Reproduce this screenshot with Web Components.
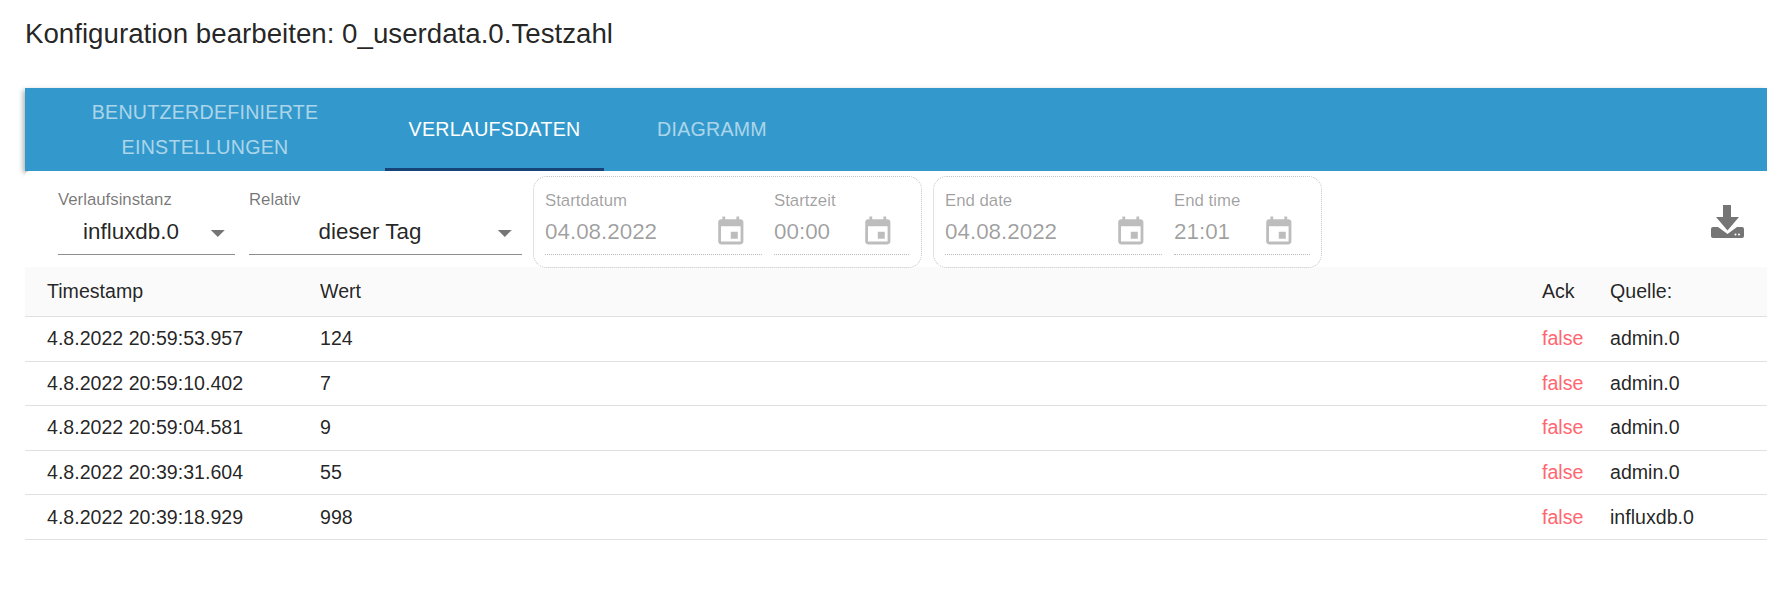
<!DOCTYPE html>
<html lang="de">
<head>
<meta charset="utf-8">
<title>Konfiguration bearbeiten</title>
<style>
  html, body { margin: 0; padding: 0; background: #fff; overflow: hidden; }
  body { font-family: "Liberation Sans", Arial, sans-serif; color: rgba(0, 0, 0, 0.87); }
</style>
</head>
<body>
<config-dialog heading="Konfiguration bearbeiten: 0_userdata.0.Testzahl">
  <tab-bar>
    <tab-item style="width:360px">BENUTZERDEFINIERTE EINSTELLUNGEN</tab-item>
    <tab-item style="width:219px" selected>VERLAUFSDATEN</tab-item>
    <tab-item style="width:216px">DIAGRAMM</tab-item>
  </tab-bar>
  <history-toolbar>
    <select-field label="Verlaufsinstanz" style="width:177px;margin-right:14px">influxdb.0</select-field>
    <select-field label="Relativ" style="width:273px;margin-right:11px">dieser Tag</select-field>
    <date-group style="margin-right:11px">
      <date-field label="Startdatum" style="width:217px;margin-right:12px">04.08.2022</date-field>
      <date-field label="Startzeit" style="width:135px">00:00</date-field>
    </date-group>
    <date-group>
      <date-field label="End date" style="width:217px;margin-right:12px">04.08.2022</date-field>
      <date-field label="End time" style="width:136px">21:01</date-field>
    </date-group>
    <download-button></download-button>
  </history-toolbar>
  <history-table></history-table>
</config-dialog>

<script>
class ConfigDialog extends HTMLElement {
  constructor() {
    super()
    this.attachShadow({ mode: "open" })
    this.shadowRoot.innerHTML = `
      <style>
        :host { display: block; padding: 0 0 0 25px; }
        h2 {
          margin: 0;
          height: 88px;
          padding-top: 16px;
          box-sizing: border-box;
          font-weight: 400;
          font-size: 27.7px;
          line-height: 36px;
          color: rgba(0, 0, 0, 0.87);
        }
      </style>
      <h2>${this.getAttribute("heading")}</h2>
      <slot></slot>
    `
  }
}

class TabBar extends HTMLElement {
  constructor() {
    super()
    this.attachShadow({ mode: "open" })
    this.shadowRoot.innerHTML = `
      <style>
        :host {
          display: flex;
          height: 83px;
          background: #3399cc;
          box-shadow: -2px 2px 5px rgba(0, 0, 0, 0.3);
          position: relative;
        }
      </style>
      <slot></slot>
    `
  }
}

class TabItem extends HTMLElement {
  constructor() {
    super()
    this.attachShadow({ mode: "open" })
    this.shadowRoot.innerHTML = `
      <style>
        :host {
          display: flex;
          align-items: center;
          justify-content: center;
          box-sizing: border-box;
          padding: 3px 24px 0;
          border-bottom: 3px solid transparent;
          font-size: 19.6px;
          font-weight: 400;
          line-height: 34.3px;
          letter-spacing: 0.27px;
          text-align: center;
          color: rgba(255, 255, 255, 0.6);
        }
        :host([selected]) {
          color: #fff;
          border-bottom-color: #164477;
        }
      </style>
      <span><slot></slot></span>
    `
  }
}

class HistoryToolbar extends HTMLElement {
  constructor() {
    super()
    this.attachShadow({ mode: "open" })
    this.shadowRoot.innerHTML = `
      <style>
        :host {
          display: flex;
          position: relative;
          height: 96px;
          box-sizing: border-box;
          padding: 5px 0 0 33px;
          align-items: flex-start;
          background: #fff;
          border-top-left-radius: 5px;
        }
      </style>
      <slot></slot>
    `
  }
}

class SelectField extends HTMLElement {
  constructor() {
    super()
    this.attachShadow({ mode: "open" })
    this.shadowRoot.innerHTML = `
      <style>
        :host { display: block; box-sizing: border-box; height: 79px; flex: none; }
        label {
          display: block;
          padding-top: 15px;
          font-size: 16.8px;
          line-height: 18px;
          color: rgba(0, 0, 0, 0.54);
        }
        .input {
          height: 46px;
          box-sizing: border-box;
          border-bottom: 1.4px solid #8e8e8e;
          display: flex;
          align-items: center;
          padding-right: 31px;
          position: relative;
        }
        .value { flex: 1; text-align: center; font-size: 22.4px; }
        svg { position: absolute; right: 0; top: 6.5px; width: 33.6px; height: 33.6px; fill: rgba(0, 0, 0, 0.54); }
      </style>
      <label>${this.getAttribute("label")}</label>
      <div class="input">
        <span class="value"><slot></slot></span>
        <svg viewBox="0 0 24 24"><path d="M7 10l5 5 5-5z"/></svg>
      </div>
    `
  }
}

class DateGroup extends HTMLElement {
  constructor() {
    super()
    this.attachShadow({ mode: "open" })
    this.shadowRoot.innerHTML = `
      <style>
        :host {
          display: flex;
          flex: none;
          box-sizing: border-box;
          width: 389px;
          height: 92px;
          padding: 0 0 0 11px;
          border: 1px dotted #c4c4c4;
          border-radius: 14px;
        }
      </style>
      <slot></slot>
    `
  }
}

class DateField extends HTMLElement {
  constructor() {
    super()
    this.attachShadow({ mode: "open" })
    this.shadowRoot.innerHTML = `
      <style>
        :host { display: block; flex: none; box-sizing: border-box; color: rgba(0, 0, 0, 0.38); }
        label { display: block; padding-top: 15px; font-size: 16.8px; line-height: 18px; }
        .input {
          height: 45px;
          box-sizing: border-box;
          border-bottom: 1px dotted #bbb;
          display: flex;
          align-items: center;
          justify-content: space-between;
        }
        .value { font-size: 22.4px; }
        svg { width: 33.6px; height: 33.6px; margin-right: 14.6px; fill: rgba(0, 0, 0, 0.26); flex: none; }
      </style>
      <label>${this.getAttribute("label")}</label>
      <div class="input">
        <span class="value"><slot></slot></span>
        <svg viewBox="0 0 24 24"><path d="M17 12h-5v5h5v-5zM16 1v2H8V1H6v2H5c-1.110 0-1.990.9-1.990 2L3 19c0 1.100.89 2 2 2h14c1.100 0 2-.9 2-2V5c0-1.100-.9-2-2-2h-1V1h-2zm3 18H5V8h14v11z"/></svg>
      </div>
    `
  }
}

class DownloadButton extends HTMLElement {
  constructor() {
    super()
    this.attachShadow({ mode: "open" })
    this.shadowRoot.innerHTML = `
      <style>
        :host { display: block; margin-left: auto; margin-right: 23px; padding-top: 29px; }
        svg { display: block; width: 33px; height: 33px; fill: #757575; }
      </style>
      <svg viewBox="0 0 33 33">
        <path d="M12 0h8v12h8L16.500 25.500 5 12h7z"/>
        <path d="M2 22h5l9.500 7L26 22h5a2 2 0 0 1 2 2v7a2 2 0 0 1-2 2H2a2 2 0 0 1-2-2v-7a2 2 0 0 1 2-2z"/>
        <circle cx="24.500" cy="29.500" r="1" fill="#fff"/>
        <circle cx="28" cy="29.500" r="1" fill="#fff"/>
      </svg>
    `
  }
}

class HistoryTable extends HTMLElement {
  constructor() {
    super()
    this.attachShadow({ mode: "open" })
    const rows = [
      ["4.8.2022 20:59:53.957", "124", "false", "admin.0"],
      ["4.8.2022 20:59:10.402", "7", "false", "admin.0"],
      ["4.8.2022 20:59:04.581", "9", "false", "admin.0"],
      ["4.8.2022 20:39:31.604", "55", "false", "admin.0"],
      ["4.8.2022 20:39:18.929", "998", "false", "influxdb.0"],
    ]
    const cells = rows.map(r => `
      <div class="row">
        <span>${r[0]}</span><span>${r[1]}</span><span class="ack">${r[2]}</span><span>${r[3]}</span>
      </div>`).join("")
    this.shadowRoot.innerHTML = `
      <style>
        :host { display: block; font-size: 19.6px; color: rgba(0, 0, 0, 0.87); }
        .row {
          display: grid;
          grid-template-columns: 273px 1fr 68px 157px;
          align-items: center;
          height: 44.6px;
          box-sizing: border-box;
          padding-left: 22px;
          border-bottom: 1.5px solid #e0e0e0;
        }
        .head { height: 50px; background: #fafafa; }
        .ack { color: #ff6670; }
      </style>
      <div class="row head"><span>Timestamp</span><span>Wert</span><span>Ack</span><span>Quelle:</span></div>
      ${cells}
    `
  }
}

customElements.define("config-dialog", ConfigDialog)
customElements.define("tab-bar", TabBar)
customElements.define("tab-item", TabItem)
customElements.define("history-toolbar", HistoryToolbar)
customElements.define("select-field", SelectField)
customElements.define("date-group", DateGroup)
customElements.define("date-field", DateField)
customElements.define("download-button", DownloadButton)
customElements.define("history-table", HistoryTable)
</script>
</body>
</html>
